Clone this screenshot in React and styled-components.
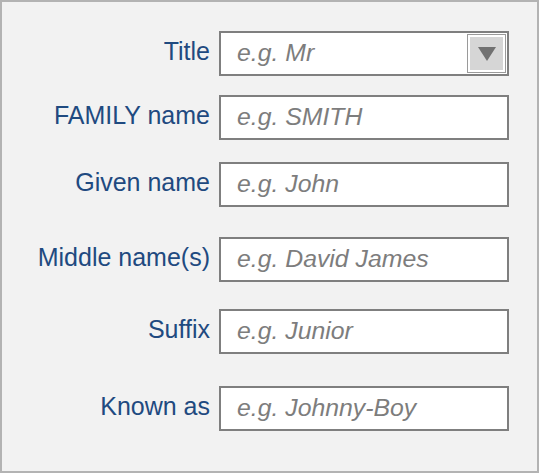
import React from "react";
import styled, { createGlobalStyle } from "styled-components";

const GlobalStyle = createGlobalStyle`
  * { box-sizing: border-box; }
  html, body { margin: 0; padding: 0; }
  body { font-family: "Liberation Sans", Arial, sans-serif; }
`;

const fields = [
  { label: "Title", placeholder: "e.g. Mr", select: true, space: 29 },
  { label: "FAMILY name", placeholder: "e.g. SMITH", space: 19 },
  { label: "Given name", placeholder: "e.g. John", space: 22 },
  { label: "Middle name(s)", placeholder: "e.g. David James", space: 30 },
  { label: "Suffix", placeholder: "e.g. Junior", space: 27 },
  { label: "Known as", placeholder: "e.g. Johnny-Boy", space: 32 },
];

const App = () => {
  return (
    <>
      <GlobalStyle />
      <Frame>
        {fields.map(({ label, placeholder, select, space }) => (
          <Row key={label} $space={space}>
            <Label>{label}</Label>
            {select ? (
              <SelectBox>
                <SelectText>{placeholder}</SelectText>
                <ArrowButton>
                  <ArrowFill>
                    <svg width="18" height="14" viewBox="0 0 18 14">
                      <polygon points="0,0 18,0 9,14" fill="#717171" />
                    </svg>
                  </ArrowFill>
                </ArrowButton>
              </SelectBox>
            ) : (
              <TextInput placeholder={placeholder} />
            )}
          </Row>
        ))}
      </Frame>
    </>
  );
};

export default App;

const Frame = styled.div`
  width: 539px;
  height: 473px;
  background: #f2f2f2;
  border: 2px solid #b3b3b3;
  display: flex;
  flex-direction: column;
`;

const Row = styled.div`
  display: grid;
  grid-template-columns: 208px 290px;
  column-gap: 9px;
  align-items: center;
  margin-top: ${({ $space }) => $space}px;
`;

const Label = styled.label`
  text-align: right;
  font-size: 25px;
  color: #1f4a80;
  padding-bottom: 4px;
  white-space: nowrap;
`;

const boxStyle = `
  height: 45px;
  width: 290px;
  background: #ffffff;
  border: 2px solid #7f7f7f;
  font-family: "Liberation Sans", Arial, sans-serif;
  font-size: 24.8px;
  font-style: italic;
`;

const TextInput = styled.input`
  ${boxStyle}
  padding: 0 0 2px 16px;
  outline: none;
  &::placeholder {
    color: #7d7d7d;
    opacity: 1;
  }
`;

const SelectBox = styled.div`
  ${boxStyle}
  display: flex;
  align-items: stretch;
  padding: 1px;
`;

const SelectText = styled.span`
  flex: 1;
  display: flex;
  align-items: center;
  padding: 0 0 2px 15px;
  color: #7d7d7d;
`;

const ArrowButton = styled.div`
  width: 39px;
  border: 1px solid #9a9a9a;
  padding: 2px;
  background: #ffffff;
`;

const ArrowFill = styled.div`
  height: 100%;
  background: #d6d6d6;
  display: flex;
  align-items: center;
  justify-content: center;
`;
